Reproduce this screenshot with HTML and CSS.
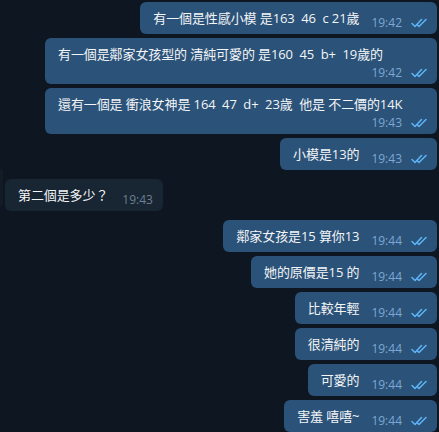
FILE: index.html
```html
<!DOCTYPE html>
<html lang="zh-Hant">
<head>
    <meta charset="UTF-8">
    <meta name="viewport" content="width=device-width, initial-scale=1.0">
    <title>Chat</title>
    <link rel="stylesheet" href="styles.css">
</head>
<body>

    <div class="chat">
        <div class="msg out">
            <span class="text">有一個是性感小模 是163  46  c 21歲</span>
            <span class="meta">19:42 <svg class="ticks" viewBox="0 0 18 10"><path d="M1 5.5 L4 8.5 L10.5 1.5 M6.5 7 L8 8.5 L15 1.5"/></svg></span>
        </div>
        <div class="msg out">
            <span class="text">有一個是鄰家女孩型的 清純可愛的 是160  45  b+  19歲的</span>
            <span class="meta">19:42 <svg class="ticks" viewBox="0 0 18 10"><path d="M1 5.5 L4 8.5 L10.5 1.5 M6.5 7 L8 8.5 L15 1.5"/></svg></span>
        </div>
        <div class="msg out">
            <span class="text">還有一個是 衝浪女神是 164  47  d+  23歲  他是 不二價的14K</span>
            <span class="meta">19:43 <svg class="ticks" viewBox="0 0 18 10"><path d="M1 5.5 L4 8.5 L10.5 1.5 M6.5 7 L8 8.5 L15 1.5"/></svg></span>
        </div>
        <div class="msg out">
            <span class="text">小模是13的</span>
            <span class="meta">19:43 <svg class="ticks" viewBox="0 0 18 10"><path d="M1 5.5 L4 8.5 L10.5 1.5 M6.5 7 L8 8.5 L15 1.5"/></svg></span>
        </div>

        <div class="row-in">
            <div class="edge"></div>
            <div class="msg in">
                <span class="text">第二個是多少？</span>
                <span class="meta">19:43</span>
            </div>
        </div>

        <div class="msg out first">
            <span class="text">鄰家女孩是15 算你13</span>
            <span class="meta">19:44 <svg class="ticks" viewBox="0 0 18 10"><path d="M1 5.5 L4 8.5 L10.5 1.5 M6.5 7 L8 8.5 L15 1.5"/></svg></span>
        </div>
        <div class="msg out">
            <span class="text">她的原價是15 的</span>
            <span class="meta">19:44 <svg class="ticks" viewBox="0 0 18 10"><path d="M1 5.5 L4 8.5 L10.5 1.5 M6.5 7 L8 8.5 L15 1.5"/></svg></span>
        </div>
        <div class="msg out">
            <span class="text">比較年輕</span>
            <span class="meta">19:44 <svg class="ticks" viewBox="0 0 18 10"><path d="M1 5.5 L4 8.5 L10.5 1.5 M6.5 7 L8 8.5 L15 1.5"/></svg></span>
        </div>
        <div class="msg out">
            <span class="text">很清純的</span>
            <span class="meta">19:44 <svg class="ticks" viewBox="0 0 18 10"><path d="M1 5.5 L4 8.5 L10.5 1.5 M6.5 7 L8 8.5 L15 1.5"/></svg></span>
        </div>
        <div class="msg out">
            <span class="text">可愛的</span>
            <span class="meta">19:44 <svg class="ticks" viewBox="0 0 18 10"><path d="M1 5.5 L4 8.5 L10.5 1.5 M6.5 7 L8 8.5 L15 1.5"/></svg></span>
        </div>
        <div class="msg out">
            <span class="text">害羞 嘻嘻~</span>
            <span class="meta">19:44 <svg class="ticks" viewBox="0 0 18 10"><path d="M1 5.5 L4 8.5 L10.5 1.5 M6.5 7 L8 8.5 L15 1.5"/></svg></span>
        </div>
    </div>

</body>
</html>
```

FILE: styles.css
```css
body {
    margin: 0;
    background-color: #0e1621;
    font-family: "Open Sans", "Noto Sans CJK TC", sans-serif;
    overflow: hidden;
}
.chat {
    display: flex;
    flex-direction: column;
    gap: 4px;
    padding: 2px 2px 0 0;
}
.msg {
    display: flex;
    flex-wrap: wrap;
    align-items: flex-end;
    box-sizing: border-box;
    max-width: 392px;
    padding: 7px 8px 7px 13px;
    border-radius: 6px;
}
.msg.out {
    align-self: flex-end;
    background-color: #2b5278;
}
.msg.first {
    margin-top: 5px;
}
.row-in {
    display: flex;
    align-items: flex-start;
    margin-top: 5px;
}
.edge {
    width: 3px;
    height: 38px;
    margin-top: -10px;
    margin-right: 2px;
    background-color: #121b26;
    border-bottom-right-radius: 4px;
}
.msg.in {
    background-color: #182533;
    padding-right: 10px;
}
.text {
    font-size: 13px;
    line-height: 18px;
    letter-spacing: -0.1px;
    color: #f3f5f7;
    white-space: pre-wrap;
}
.meta {
    display: flex;
    align-items: center;
    gap: 9px;
    margin-left: auto;
    margin-top: 3px;
    margin-bottom: -3px;
    padding-left: 12px;
    font-size: 12px;
    line-height: 14px;
    color: #7da8d3;
}
.msg.in .meta {
    padding-left: 14px;
    color: #6d7f8f;
}
.ticks {
    width: 18px;
    height: 10px;
    fill: none;
    stroke: #5eb5f7;
    stroke-width: 1.5;
    stroke-linecap: round;
    stroke-linejoin: round;
}
```
